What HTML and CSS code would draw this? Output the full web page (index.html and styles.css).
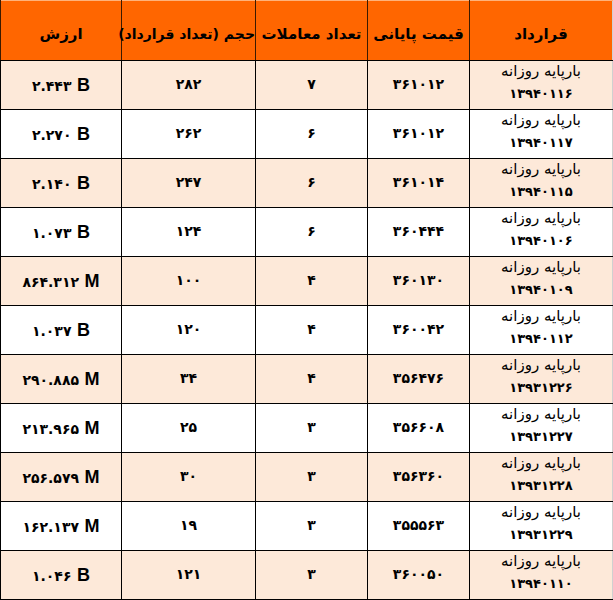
FILE: index.html
```html
<!DOCTYPE html>
<html lang="fa" dir="rtl">
<head>
<meta charset="utf-8">
<link rel="stylesheet" href="styles.css">
</head>
<body>
<table class="grid">
  <colgroup>
    <col class="c-contract"><col class="c-price"><col class="c-count"><col class="c-vol"><col class="c-value">
  </colgroup>
  <thead>
    <tr class="head">
      <th>قرارداد</th>
      <th>قیمت پایانی</th>
      <th>تعداد معاملات</th>
      <th class="tight">حجم (تعداد قرارداد)</th>
      <th>ارزش</th>
    </tr>
  </thead>
  <tbody>
    <tr class="tint"><td class="contract"><span class="name">بارپایه روزانه</span><span class="code">۱۳۹۴۰۱۱۶</span></td><td class="num">۳۶۱۰۱۲</td><td class="num">۷</td><td class="num">۲۸۲</td><td class="val"><span class="n">۲.۴۴۳</span> <span class="u">B</span></td></tr>
    <tr><td class="contract"><span class="name">بارپایه روزانه</span><span class="code">۱۳۹۴۰۱۱۷</span></td><td class="num">۳۶۱۰۱۲</td><td class="num">۶</td><td class="num">۲۶۲</td><td class="val"><span class="n">۲.۲۷۰</span> <span class="u">B</span></td></tr>
    <tr class="tint"><td class="contract"><span class="name">بارپایه روزانه</span><span class="code">۱۳۹۴۰۱۱۵</span></td><td class="num">۳۶۱۰۱۴</td><td class="num">۶</td><td class="num">۲۴۷</td><td class="val"><span class="n">۲.۱۴۰</span> <span class="u">B</span></td></tr>
    <tr><td class="contract"><span class="name">بارپایه روزانه</span><span class="code">۱۳۹۴۰۱۰۶</span></td><td class="num">۳۶۰۴۴۴</td><td class="num">۶</td><td class="num">۱۲۴</td><td class="val"><span class="n">۱.۰۷۳</span> <span class="u">B</span></td></tr>
    <tr class="tint"><td class="contract"><span class="name">بارپایه روزانه</span><span class="code">۱۳۹۴۰۱۰۹</span></td><td class="num">۳۶۰۱۳۰</td><td class="num">۴</td><td class="num">۱۰۰</td><td class="val"><span class="n">۸۶۴.۳۱۲</span> <span class="u">M</span></td></tr>
    <tr><td class="contract"><span class="name">بارپایه روزانه</span><span class="code">۱۳۹۴۰۱۱۲</span></td><td class="num">۳۶۰۰۴۲</td><td class="num">۴</td><td class="num">۱۲۰</td><td class="val"><span class="n">۱.۰۳۷</span> <span class="u">B</span></td></tr>
    <tr class="tint"><td class="contract"><span class="name">بارپایه روزانه</span><span class="code">۱۳۹۳۱۲۲۶</span></td><td class="num">۳۵۶۴۷۶</td><td class="num">۴</td><td class="num">۳۴</td><td class="val"><span class="n">۲۹۰.۸۸۵</span> <span class="u">M</span></td></tr>
    <tr><td class="contract"><span class="name">بارپایه روزانه</span><span class="code">۱۳۹۳۱۲۲۷</span></td><td class="num">۳۵۶۶۰۸</td><td class="num">۳</td><td class="num">۲۵</td><td class="val"><span class="n">۲۱۳.۹۶۵</span> <span class="u">M</span></td></tr>
    <tr class="tint"><td class="contract"><span class="name">بارپایه روزانه</span><span class="code">۱۳۹۳۱۲۲۸</span></td><td class="num">۳۵۶۳۶۰</td><td class="num">۳</td><td class="num">۳۰</td><td class="val"><span class="n">۲۵۶.۵۷۹</span> <span class="u">M</span></td></tr>
    <tr><td class="contract"><span class="name">بارپایه روزانه</span><span class="code">۱۳۹۳۱۲۲۹</span></td><td class="num">۳۵۵۵۶۳</td><td class="num">۳</td><td class="num">۱۹</td><td class="val"><span class="n">۱۶۲.۱۳۷</span> <span class="u">M</span></td></tr>
    <tr class="tint"><td class="contract"><span class="name">بارپایه روزانه</span><span class="code">۱۳۹۴۰۱۱۰</span></td><td class="num">۳۶۰۰۵۰</td><td class="num">۳</td><td class="num">۱۲۱</td><td class="val"><span class="n">۱.۰۴۶</span> <span class="u">B</span></td></tr>
  </tbody>
</table>
</body>
</html>
```

FILE: styles.css
```css
html, body {
  margin: 0;
  padding: 0;
  background: #ffffff;
}

body {
  font-family: "DejaVu Sans", "Noto Sans", sans-serif;
  color: #000;
}

.grid {
  border-collapse: collapse;
  table-layout: fixed;
  width: 612px;
  border-right: 1px solid #d0d0d0;
}

.c-contract { width: 143px; }
.c-price { width: 102px; }
.c-count { width: 112px; }
.c-vol { width: 134px; }
.c-value { width: 121px; }

.head {
  height: 60px;
  background: #ff6600;
}

.head th {
  border-left: 1px solid #3a1a00;
  border-bottom: 1px solid #000;
  border-top: 1px solid #ffb27a;
  font-size: 15px;
  font-weight: bold;
  text-align: center;
  vertical-align: middle;
  padding: 6px 0 0 0;
  white-space: nowrap;
}

.head th.tight {
  font-size: 14px;
  letter-spacing: -0.2px;
}

tbody tr {
  height: 49px;
  background: #ffffff;
}

tbody tr.tint {
  background: #fde9d9;
}

tbody td {
  border: 1px solid #000;
  border-right: none;
  text-align: center;
  vertical-align: middle;
  padding: 0;
}

tbody td:first-child {
  border-right: 1px solid #d0d0d0;
}

.num {
  font-size: 14px;
  font-weight: bold;
  padding-bottom: 2px;
}

.contract {
  font-size: 15px;
  line-height: 22px;
}

.contract .name,
.contract .code {
  display: block;
}

.contract .name {
  margin-top: -5px;
}

.contract .code {
  font-size: 13px;
  font-weight: bold;
  margin-top: 1px;
}

.val {
  direction: ltr;
  white-space: nowrap;
  font-weight: bold;
}

.val .n {
  font-size: 14px;
}

.val .u {
  font-family: "Liberation Sans", Arial, sans-serif;
  font-size: 18px;
}
```
